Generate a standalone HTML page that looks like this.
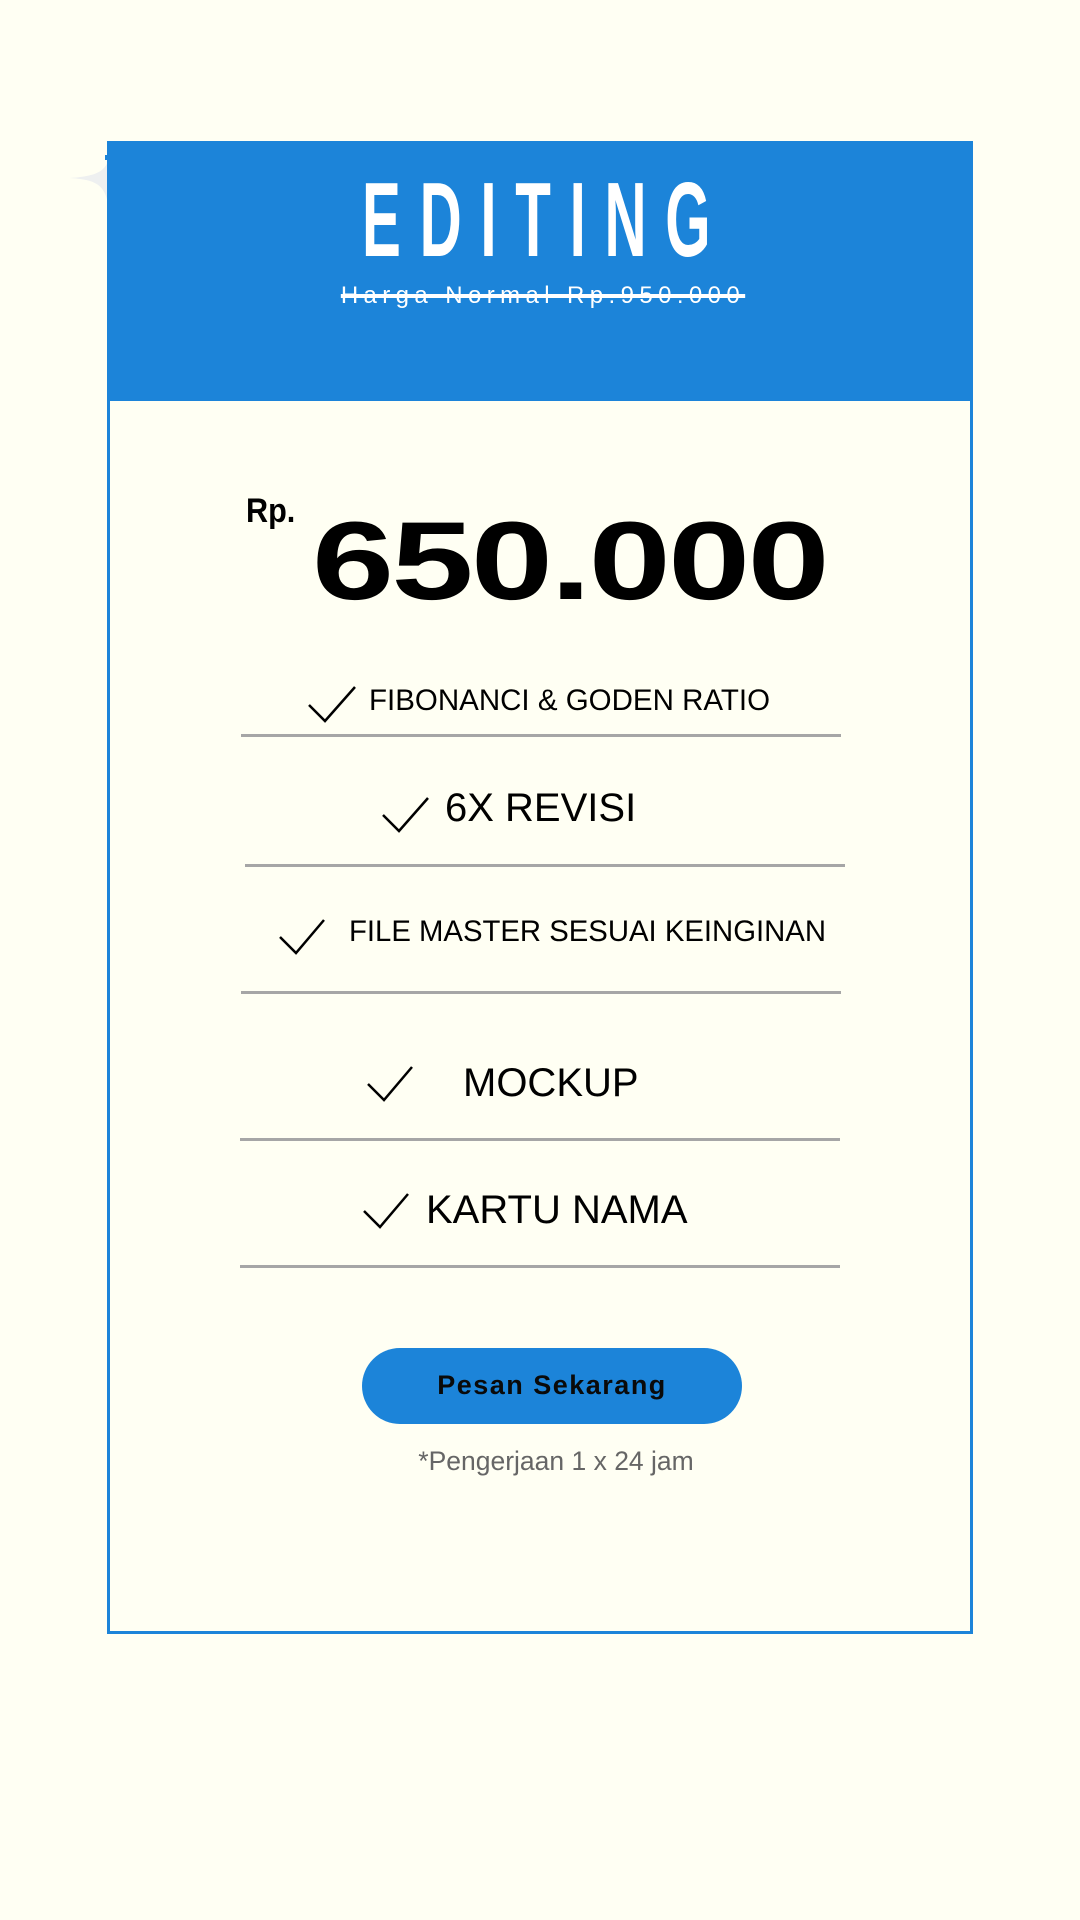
<!DOCTYPE html>
<html><head><meta charset="utf-8"><style>
html,body{margin:0;padding:0}
body{width:1080px;height:1920px;background:#fffff3;position:relative;overflow:hidden;font-family:"Liberation Sans",sans-serif}
.a{position:absolute}
.line{position:absolute;height:3px;background:#a6a6a6}
.t{position:absolute;white-space:nowrap;color:#000;line-height:1}
</style></head><body>
<svg class="a" style="left:60px;top:140px" width="60" height="90"><path d="M50 12 C48 30 40 36 10 38 C40 40 48 46 50 80 Z" fill="#eef0f0"/></svg>
<div class="a" style="left:105px;top:155px;width:6px;height:5px;background:#1c84d9"></div>
<!-- card border -->
<div class="a" style="left:107px;top:141px;width:860px;height:1490px;border:3px solid #1c84d9;border-top:none"></div>
<!-- header -->
<div class="a" style="left:110px;top:141px;width:860px;height:260px;background:#1c84d9"></div>
<div class="t" style="left:362px;top:167px;color:#fff;font-size:106px;font-weight:bold;letter-spacing:34px;transform:scaleX(0.55);transform-origin:0 0">EDITING</div>
<div class="t" style="left:0;width:1086px;top:284px;text-align:center;color:#fff;font-size:24px;letter-spacing:5.4px;text-decoration:line-through;text-decoration-thickness:4px">Harga Normal Rp.950.000</div>
<!-- price -->
<div class="t" style="left:246px;top:494px;font-size:34px;font-weight:bold;transform:scaleX(0.9);transform-origin:0 0">Rp.</div>
<div class="t" style="left:312px;top:506px;font-size:111px;font-weight:bold;transform:scaleX(1.33);transform-origin:0 0;letter-spacing:-2px">650.000</div>
<!-- items -->
<svg class="a" style="left:0;top:0" width="1080" height="1920" fill="none" stroke="#000" stroke-width="2.5">
<path d="M309 705 L325 721 L355 687"/>
<path d="M383 815 L399 831 L428 798"/>
<path d="M280 937 L296 953 L324 920"/>
<path d="M368 1084 L384 1100 L412 1067"/>
<path d="M364 1211 L380 1227 L408 1194"/>
</svg>
<div class="t" style="left:369px;top:686px;font-size:29.5px">FIBONANCI &amp; GODEN RATIO</div>
<div class="line" style="left:241px;top:734px;width:600px"></div>
<div class="t" style="left:445px;top:788px;font-size:40px">6X REVISI</div>
<div class="line" style="left:245px;top:864px;width:600px"></div>
<div class="t" style="left:349px;top:917px;font-size:29.3px">FILE MASTER SESUAI KEINGINAN</div>
<div class="line" style="left:241px;top:991px;width:600px"></div>
<div class="t" style="left:463px;top:1063px;font-size:40px">MOCKUP</div>
<div class="line" style="left:240px;top:1138px;width:600px"></div>
<div class="t" style="left:426px;top:1190px;font-size:40px">KARTU NAMA</div>
<div class="line" style="left:240px;top:1265px;width:600px"></div>
<!-- button -->
<div class="a" style="left:362px;top:1348px;width:380px;height:76px;border-radius:38px;background:#1c84d9"></div>
<div class="t" style="left:362px;width:380px;top:1372px;text-align:center;font-size:27px;font-weight:bold;letter-spacing:1.5px;color:#0a0a0a">Pesan Sekarang</div>
<div class="t" style="left:0;width:1112px;top:1448px;text-align:center;font-size:26.5px;color:#666">*Pengerjaan 1 x 24 jam</div>
</body></html>
